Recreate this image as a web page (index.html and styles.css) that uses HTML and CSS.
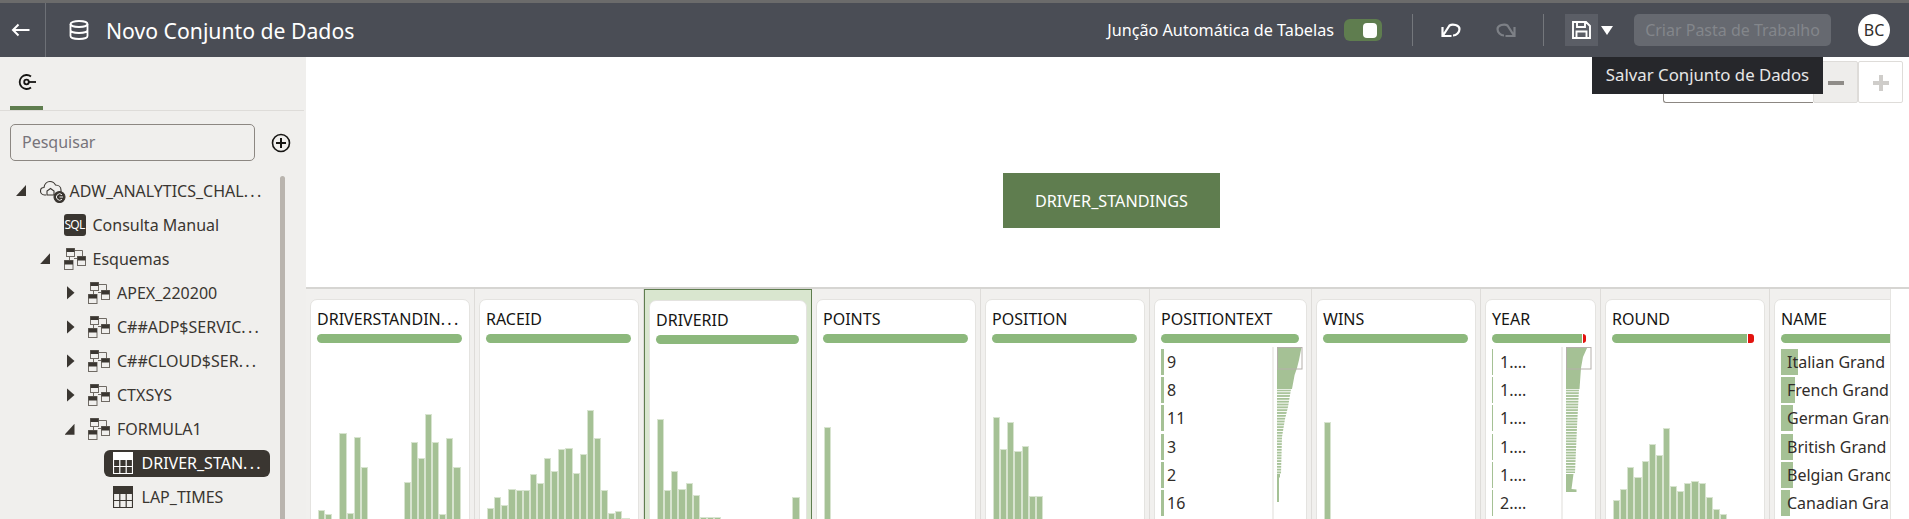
FILE: index.html
```html
<!DOCTYPE html>
<html>
<head>
<meta charset="utf-8">
<title>Novo Conjunto de Dados</title>
<link rel="stylesheet" href="styles.css">
</head>
<body>

<svg class="defs" width="0" height="0">
  <symbol id="schema" viewBox="0 0 22 22">
    <path d="M10 2.5h8.5V9M5.500 8v4M10 10.500h4" fill="none" stroke="#6f6a64" stroke-width="1"/>
    <rect x="2.500" y="0.500" width="8" height="8" fill="#fff0" stroke="#6f6a64"/>
    <rect x="2.500" y="0.500" width="8" height="3.500" fill="#3a3631"/>
    <rect x="0.500" y="12.500" width="8.500" height="9" fill="#fff0" stroke="#6f6a64"/>
    <rect x="0.500" y="12.500" width="8.500" height="4" fill="#3a3631"/>
    <rect x="13.500" y="8.500" width="8" height="9" fill="#fff0" stroke="#6f6a64"/>
    <rect x="13.500" y="8.500" width="8" height="4" fill="#3a3631"/>
  </symbol>
  <symbol id="table" viewBox="0 0 20 22">
    <rect x="0" y="0" width="20" height="8" fill="currentColor"/>
    <path d="M0.500 8v13.500h19V8M0.500 14.500h19M6.800 8v13.500M13.200 8v13.500" fill="none" stroke="currentColor" stroke-width="1.200"/>
  </symbol>
  <pattern id="stripes" width="4" height="2.830" patternUnits="userSpaceOnUse">
    <rect width="4" height="1.800" fill="#a5c195"/>
  </pattern>
</svg>

<div class="app">

  <header class="topbar">
    <div class="back">
      <svg width="20" height="14" viewBox="0 0 20 14"><path d="M18.500 7H2M7.500 1.500 2 7l5.500 5.500" fill="none" stroke="#fff" stroke-width="2"/></svg>
    </div>
    <svg class="dbicon" width="20" height="20" viewBox="0 0 20 20" fill="none" stroke="#fff" stroke-width="1.800">
      <ellipse cx="10" cy="4" rx="8.500" ry="3"/>
      <path d="M1.500 4v12c0 1.700 3.800 3 8.500 3s8.500-1.300 8.500-3V4M1.500 10c0 1.700 3.800 3 8.500 3s8.500-1.300 8.500-3"/>
    </svg>
    <h1 class="title">Novo Conjunto de Dados</h1>

    <div class="actions">
      <span class="joinlabel">Junção Automática de Tabelas</span>
      <span class="toggle"><i></i></span>
      <span class="vsep first"></span>
      <svg class="undo" width="20" height="14" viewBox="0 0 20 14" fill="none" stroke="#fff" stroke-width="2.200">
        <path d="M1.500 4v9h9M2 12.500 8.500 2.500c3-2 10-.5 10 3.500 0 3.500-3 6.500-6.500 6.500"/>
      </svg>
      <svg class="redo" width="20" height="14" viewBox="0 0 20 14" fill="none" stroke="#7d8086" stroke-width="2.200">
        <path d="M18.500 4v9h-9M18 12.500 11.500 2.500c-3-2-10-.5-10 3.500 0 3.500 3 6.500 6.500 6.500"/>
      </svg>
      <span class="vsep second"></span>
      <span class="savebtn">
        <svg width="19" height="18" viewBox="0 0 19 18" fill="none" stroke="#fff" stroke-width="1.900">
          <path d="M1 1h13l4 4v12H1zM5 1v5h8V1M4.500 17v-6.500h10V17"/>
        </svg>
      </span>
      <span class="savecaret"></span>
      <span class="createbtn">Criar Pasta de Trabalho</span>
      <span class="avatar">BC</span>
    </div>
  </header>

  <div class="main">

    <aside class="sidebar">
      <div class="tabs">
        <div class="tab">
          <svg width="20" height="18" viewBox="0 0 20 18" fill="none" stroke="#161513" stroke-width="1.800">
            <path d="M14 3.500A7 7 0 1 0 14 14.500"/>
            <circle cx="9.500" cy="9" r="2.300"/>
            <path d="M12 9h7"/>
          </svg>
        </div>
      </div>
      <div class="searchrow">
        <div class="search">Pesquisar</div>
        <svg class="addbtn" width="20" height="20" viewBox="0 0 20 20" fill="none" stroke="#161513" stroke-width="1.600">
          <circle cx="10" cy="10" r="8.500"/>
          <path d="M10 5v10M5 10h10" stroke-width="2"/>
        </svg>
      </div>

      <div class="treewrap">
        <ul class="tree">
          <li class="row d0">
            <span class="caret open"></span>
            <svg class="ticon cloud" width="26" height="24" viewBox="0 0 26 24" fill="none" stroke="#3a3631" stroke-width="1.100">
              <path d="M6 16H4.500C2 16 .5 14 .5 12s1.500-3.500 3.500-3.500C4.500 5 7 2.500 10 2.500c2.500 0 4.500 1.500 5.500 3.500 3 0 5.500 2 5.500 5v2"/>
              <path d="M7 16v-4l3.500-2.500L14 12v4z"/>
              <circle cx="19.500" cy="18" r="5.500" fill="#3a3631"/>
              <path d="M22 15.800a3.200 3.200 0 1 0 0 4.400M19.500 18H23" stroke="#f0efed" stroke-width="1"/>
            </svg>
            <span class="tlabel">ADW_ANALYTICS_CHAL<span class="more">...</span></span>
          </li>
          <li class="row d1">
            <span class="caret none"></span>
            <span class="sqlicon">SQL</span>
            <span class="tlabel">Consulta Manual</span>
          </li>
          <li class="row d1">
            <span class="caret open"></span>
            <svg class="ticon" width="22" height="22"><use href="#schema"/></svg>
            <span class="tlabel">Esquemas</span>
          </li>
          <li class="row d2">
            <span class="caret closed"></span>
            <svg class="ticon" width="22" height="22"><use href="#schema"/></svg>
            <span class="tlabel">APEX_220200</span>
          </li>
          <li class="row d2">
            <span class="caret closed"></span>
            <svg class="ticon" width="22" height="22"><use href="#schema"/></svg>
            <span class="tlabel">C##ADP$SERVIC<span class="more">...</span></span>
          </li>
          <li class="row d2">
            <span class="caret closed"></span>
            <svg class="ticon" width="22" height="22"><use href="#schema"/></svg>
            <span class="tlabel">C##CLOUD$SER<span class="more">...</span></span>
          </li>
          <li class="row d2">
            <span class="caret closed"></span>
            <svg class="ticon" width="22" height="22"><use href="#schema"/></svg>
            <span class="tlabel">CTXSYS</span>
          </li>
          <li class="row d2">
            <span class="caret open"></span>
            <svg class="ticon" width="22" height="22"><use href="#schema"/></svg>
            <span class="tlabel">FORMULA1</span>
          </li>
          <li class="row d3">
            <span class="caret none"></span>
            <span class="selnode">
              <svg class="ticon tbl" width="20" height="22"><use href="#table"/></svg>
              <span class="tlabel">DRIVER_STAN<span class="more">...</span></span>
            </span>
          </li>
          <li class="row d3">
            <span class="caret none"></span>
            <svg class="ticon tbl" width="20" height="22"><use href="#table"/></svg>
            <span class="tlabel">LAP_TIMES</span>
          </li>
        </ul>
        <div class="thumb"></div>
      </div>
    </aside>

    <section class="content">
      <div class="canvas">
        <div class="node">DRIVER_STANDINGS</div>
        <div class="zoomctl">
          <span class="zoomfield"></span>
          <span class="zoombtn minus"></span>
          <span class="zoombtn plus"></span>
        </div>
        <div class="tooltip">Salvar Conjunto de Dados</div>
      </div>

      <div class="profile">
        <div class="columns">

          <div class="col">
            <div class="card">
              <div class="cname">DRIVERSTANDIN<span class="more">...</span></div>
              <div class="quality"></div>
              <div class="hist">
                <i style="height:9px"></i><i style="height:5px"></i><i class="gap"></i><i style="height:85.7px"></i><i style="height:6.3px"></i><i style="height:82.3px"></i><i style="height:51.7px"></i><i class="gap"></i><i class="gap"></i><i class="gap"></i><i class="gap"></i><i class="gap"></i><i style="height:37px"></i><i style="height:77px"></i><i style="height:61px"></i><i style="height:105px"></i><i style="height:77px"></i><i style="height:5px"></i><i style="height:80.7px"></i><i style="height:51.7px"></i>
              </div>
            </div>
          </div>

          <div class="col">
            <div class="card">
              <div class="cname">RACEID</div>
              <div class="quality"></div>
              <div class="hist">
                <i style="height:11px"></i><i style="height:21.7px"></i><i style="height:14.3px"></i><i style="height:30px"></i><i style="height:28.7px"></i><i style="height:28.7px"></i><i style="height:45px"></i><i style="height:36.3px"></i><i style="height:61px"></i><i style="height:47.7px"></i><i style="height:69.7px"></i><i style="height:71px"></i><i style="height:46.3px"></i><i style="height:65.3px"></i><i style="height:109px"></i><i style="height:81.3px"></i><i style="height:28.7px"></i><i style="height:5.7px"></i><i style="height:8.3px"></i><i style="height:1px"></i>
              </div>
            </div>
          </div>

          <div class="col selected">
            <div class="card">
              <div class="cname">DRIVERID</div>
              <div class="quality"></div>
              <div class="hist">
                <i style="height:101.3px"></i><i style="height:30px"></i><i style="height:49px"></i><i style="height:31px"></i><i style="height:36.7px"></i><i style="height:25.3px"></i><i style="height:3px"></i><i style="height:3px"></i><i style="height:3px"></i><i class="gap"></i><i class="gap"></i><i class="gap"></i><i class="gap"></i><i class="gap"></i><i class="gap"></i><i class="gap"></i><i class="gap"></i><i class="gap"></i><i class="gap"></i><i style="height:23px"></i>
              </div>
            </div>
          </div>

          <div class="col">
            <div class="card">
              <div class="cname">POINTS</div>
              <div class="quality"></div>
              <div class="hist"><i style="height:92px"></i></div>
            </div>
          </div>

          <div class="col">
            <div class="card">
              <div class="cname">POSITION</div>
              <div class="quality"></div>
              <div class="hist">
                <i style="height:101.7px"></i><i style="height:69.7px"></i><i style="height:96.7px"></i><i style="height:68px"></i><i style="height:73px"></i><i style="height:23.3px"></i><i style="height:23.3px"></i>
              </div>
            </div>
          </div>

          <div class="col text">
            <div class="card">
              <div class="cname">POSITIONTEXT</div>
              <div class="quality"></div>
              <div class="split">
                <ul class="cats">
                  <li><i style="width:3px"></i><span>9</span></li>
                  <li><i style="width:3px"></i><span>8</span></li>
                  <li><i style="width:3px"></i><span>11</span></li>
                  <li><i style="width:3px"></i><span>3</span></li>
                  <li><i style="width:3px"></i><span>2</span></li>
                  <li><i style="width:3px"></i><span>16</span></li>
                </ul>
                <div class="mini">
                  <svg width="26" height="160" viewBox="0 0 26 160">
                    <path d="M0 0H24.600L22 13 20 21 17.600 28 15 42H0z" fill="#a5c195"/>
                    <path d="M0 42.500H14L11 60 8 72 5 90 4 127H0z" fill="url(#stripes)"/>
                    <path d="M0 127H3V130.500H2V155H0z" fill="#a5c195"/>
                    <rect x="0.500" y="0.500" width="24.500" height="21.500" fill="none" stroke="#b5b0ab"/>
                  </svg>
                </div>
              </div>
            </div>
          </div>

          <div class="col">
            <div class="card">
              <div class="cname">WINS</div>
              <div class="quality"></div>
              <div class="hist"><i style="height:96.7px"></i></div>
            </div>
          </div>

          <div class="col year">
            <div class="card">
              <div class="cname">YEAR</div>
              <div class="quality"><b style="width:90px"></b><u style="width:3px"></u></div>
              <div class="split">
                <ul class="cats thin">
                  <li><i style="width:1px"></i><span>1....</span></li>
                  <li><i style="width:1px"></i><span>1....</span></li>
                  <li><i style="width:1px"></i><span>1....</span></li>
                  <li><i style="width:1px"></i><span>1....</span></li>
                  <li><i style="width:1px"></i><span>1....</span></li>
                  <li><i style="width:1px"></i><span>2....</span></li>
                </ul>
                <div class="mini">
                  <svg width="26" height="160" viewBox="0 0 26 160">
                    <path d="M0 0H21.500L17 10 15 21 13.500 42H0z" fill="#a5c195"/>
                    <path d="M0 42.500H13L11 80 9 126H0z" fill="url(#stripes)"/>
                    <path d="M0 127H7.500L5.500 142 10.500 142.500V145H0z" fill="#a5c195"/>
                    <rect x="0.500" y="0.500" width="24.500" height="21.500" fill="none" stroke="#b5b0ab"/>
                  </svg>
                </div>
              </div>
            </div>
          </div>

          <div class="col">
            <div class="card">
              <div class="cname">ROUND</div>
              <div class="quality"><b style="width:135px"></b><u style="width:6px"></u></div>
              <div class="hist">
                <i style="height:19px"></i><i style="height:29.7px"></i><i style="height:51.7px"></i><i style="height:41.7px"></i><i style="height:57.7px"></i><i style="height:75px"></i><i style="height:63.7px"></i><i style="height:90.7px"></i><i style="height:33px"></i><i style="height:28.3px"></i><i style="height:35.7px"></i><i style="height:38px"></i><i style="height:35.7px"></i><i style="height:22.3px"></i><i style="height:10px"></i><i style="height:5px"></i>
              </div>
            </div>
          </div>

          <div class="col last">
            <div class="card">
              <div class="cname">NAME</div>
              <div class="quality"></div>
              <ul class="cats names">
                <li><i style="width:16.7px"></i><span>Italian Grand Prix</span></li>
                <li><i style="width:13.8px"></i><span>French Grand Prix</span></li>
                <li><i style="width:12px"></i><span>German Grand Prix</span></li>
                <li><i style="width:12px"></i><span>British Grand Prix</span></li>
                <li><i style="width:11.8px"></i><span>Belgian Grand Prix</span></li>
                <li><i style="width:8.7px"></i><span>Canadian Grand Prix</span></li>
              </ul>
            </div>
          </div>

        </div>
        <div class="vscroll"></div>
      </div>
    </section>
  </div>
</div>

</body>
</html>
```

FILE: styles.css
```css
* { box-sizing: border-box; }
html, body { margin: 0; height: 100%; overflow: hidden; }
body { font-family: "Noto Sans", "Open Sans", sans-serif; color: #312d2a; background: #fff; }
ul { list-style: none; margin: 0; padding: 0; }
.defs { position: absolute; }
.more { letter-spacing: 2.3px; }

.app { height: 519px; display: flex; flex-direction: column; overflow: hidden; }

/* top bar */
.topbar { height: 57px; flex: none; display: flex; align-items: center; background: #4a4d55; border-top: 3px solid #6b6b6b; color: #fff; }
.back { width: 46px; height: 100%; display: flex; align-items: center; padding-left: 11px; border-right: 1px solid #6d7076; }
.dbicon { margin-left: 23px; flex: none; }
.title { margin: 0 0 0 17px; font-size: 21.2px; font-weight: 400; }
.actions { margin-left: auto; display: flex; align-items: center; height: 100%; }
.joinlabel { font-size: 16.2px; }
.toggle { margin-left: 10px; width: 38px; height: 22px; border-radius: 6px; background: #5f7d4f; display: flex; align-items: center; justify-content: flex-end; padding-right: 5px; }
.toggle i { width: 14px; height: 15px; border-radius: 4px; background: #fff; }
.vsep { width: 1px; height: 32px; background: #74777c; }
.vsep.first { margin-left: 30px; }
.undo { margin-left: 28px; }
.redo { margin-left: 35px; }
.vsep.second { margin-left: 27px; }
.savebtn { margin-left: 21px; width: 33px; height: 32px; background: #5b5e66; display: flex; align-items: center; justify-content: center; }
.savecaret { margin-left: 3px; width: 0; height: 0; border-left: 6.500px solid transparent; border-right: 6.500px solid transparent; border-top: 9px solid #fff; }
.createbtn { margin-left: 21px; width: 197px; height: 32px; border-radius: 5px; background: #666970; color: #83868b; font-size: 16px; display: flex; align-items: center; justify-content: center; white-space: nowrap; }
.avatar { margin: 0 19px 0 27px; width: 32px; height: 32px; border-radius: 50%; background: #fff; color: #312d2a; font-size: 16px; display: flex; align-items: center; justify-content: center; }

.main { flex: 1; min-height: 0; display: flex; }

/* left panel */
.sidebar { width: 306px; flex: none; background: #f0efed; display: flex; flex-direction: column; }
.tabs { height: 54px; flex: none; margin-right: 2px; padding-left: 10px; border-bottom: 1px solid #dedcd9; }
.tab { width: 33px; height: 53px; border-bottom: 4px solid #5f7d4f; display: flex; justify-content: center; padding-top: 16px; }
.searchrow { display: flex; align-items: center; margin: 13px 0 0 10px; flex: none; }
.search { width: 245px; height: 37px; border: 1px solid #8c8782; border-radius: 5px; padding-left: 11px; line-height: 34px; font-size: 16px; color: #77747a; }
.addbtn { margin-left: 16px; }

.treewrap { flex: 1; min-height: 0; display: flex; margin-top: 12.500px; }
.tree { width: 280px; flex: none; }
.thumb { width: 5px; margin-top: 2px; border-radius: 3px 3px 0 0; background: #b9b4ae; }
.row { height: 34.1px; display: flex; align-items: center; font-size: 16px; color: #3a3631; white-space: nowrap; }
.row.d0 { padding-left: 16px; }
.row.d1 { padding-left: 40px; }
.row.d2 { padding-left: 64.5px; }
.row.d3 { padding-left: 89px; }
.caret { width: 23.5px; flex: none; display: block; height: 0; }
.caret.open { height: 11px; background: #3a3631; width: 10px; margin-right: 13.5px; clip-path: polygon(100% 0, 100% 100%, 0 100%); }
.caret.closed { height: 14px; width: 8px; margin: 0 13.5px 0 2px; background: #3a3631; clip-path: polygon(0 0, 100% 50%, 0 100%); }
.ticon { flex: none; margin-right: 7px; }
.ticon.cloud { margin: 0 4px 0 0; }
.ticon.tbl { color: #3a3631; margin-right: 9px; }
.sqlicon { width: 22px; height: 22px; margin-right: 7px; border-radius: 3px; background: #3a3631; color: #fff; font-size: 12px; letter-spacing: -0.8px; text-align: center; line-height: 22px; flex: none; }
.selnode { display: flex; align-items: center; height: 27px; margin-left: -9px; width: 166px; padding-left: 9px; border-radius: 6px; background: #3a3631; color: #fff; }
.selnode .ticon.tbl { color: #fff; }

/* join diagram */
.content { flex: 1; min-width: 0; display: flex; flex-direction: column; }
.canvas { height: 232px; flex: none; position: relative; background: #fff; border-bottom: 2px solid #d6d5d2; padding: 116px 0 0 697px; }
.node { width: 217px; height: 55px; background: #5f7d4f; color: #fff; font-size: 16.2px; display: flex; align-items: center; justify-content: center; }
.zoomctl { position: absolute; top: 4px; left: 1357px; display: flex; }
.zoomfield { width: 150px; height: 42px; background: #fff; border: 1px solid #8c8782; border-right: 0; border-radius: 3px 0 0 3px; }
.zoombtn { width: 45px; height: 42px; position: relative; border: 1px solid #dedcd9; border-radius: 2px; }
.zoombtn.minus { background: #eeedeb; }
.zoombtn::before { content: ""; position: absolute; left: 14px; top: 19px; width: 16px; height: 4px; background: #8f8c88; }
.zoombtn.plus::before { background: #cfcdca; }
.zoombtn.plus::after { content: ""; position: absolute; left: 20px; top: 13px; width: 4px; height: 16px; background: #cfcdca; }
.tooltip { position: absolute; top: 0; left: 1286px; width: 231px; height: 37px; background: #26272b; color: #e6e6e6; font-size: 16.8px; line-height: 36px; text-align: center; white-space: nowrap; }

/* column profile */
.profile { flex: 1; min-height: 0; display: flex; background: #f1f0ee; overflow: hidden; }
.columns { flex: 1; min-width: 0; display: flex; overflow: hidden; }
.vscroll { width: 19px; flex: none; background: #fff; border-left: 1px solid #e6e5e2; }
.col { width: 169px; flex: none; height: 240px; padding: 10px 4px 0; border-right: 1px solid #dedcd9; }
.col.selected { width: 168px; background: #d9e6cf; border: 1px solid #5f7d4f; }
.col.text { width: 162px; }
.col.year { width: 120px; }
.col.last { border-right: 0; }
.card { height: 100%; display: flex; flex-direction: column; background: #fff; border: 1px solid #e4e3e0; border-radius: 7px; padding: 0 6px; overflow: hidden; }
.cname { font-size: 16px; line-height: 20px; padding-top: 9px; color: #161513; white-space: nowrap; }
.quality { height: 9px; margin-top: 5px; margin-right: 1px; flex: none; border-radius: 5px; background: #8cb87c; display: flex; overflow: hidden; }
.quality:has(b) { background: none; }
.quality b { background: #8cb87c; }
.quality u { margin-left: 1px; background: #e2130f; border-radius: 0 3px 3px 0; }

.hist { height: 176px; flex: none; padding-left: 1px; display: flex; align-items: flex-end; }
.hist i { display: block; width: 7.140px; flex: none; background: #a5c195; border: 1px solid #d8e4d0; border-bottom: 0; }
.hist i.gap { visibility: hidden; }

.split { display: flex; flex: none; height: 176px; margin-top: 4px; }
.cats { flex: 1; min-width: 0; padding-top: 2px; display: flex; flex-direction: column; gap: 2.200px; }
.cats li { height: 26px; position: relative; font-size: 16px; line-height: 26px; flex: none; white-space: nowrap; color: #312d2a; }
.cats li i { position: absolute; left: 0; top: 0; bottom: 0; background: #a5c195; }
.cats li span { position: relative; display: block; padding-left: 6px; }
.cats.thin li span { padding-left: 8px; }
.cats.names { flex: none; margin-top: 4px; }
.mini { width: 30px; flex: none; margin-right: -2px; padding-left: 3px; border-left: 2px solid #efeeec; }
```
